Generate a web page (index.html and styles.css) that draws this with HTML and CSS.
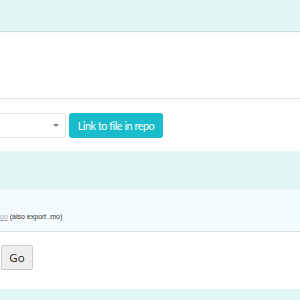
FILE: index.html
```html
<!DOCTYPE html>
<html>
<head>
<meta charset="utf-8">
<link rel="stylesheet" href="styles.css">
</head>
<body>
<div class="band top"></div>
<div class="panel"></div>
<div class="row">
  <div class="select"><span class="caret"></span></div>
  <button class="btn-link">Link to file in repo</button>
</div>
<div class="band mid"></div>
<div class="note"><span class="lnk">po</span> (also export .mo)</div>
<div class="gorow"><button class="btn-go">Go</button></div>
<div class="band bottom"></div>
</body>
</html>
```
FILE: styles.css
```css
html, body { margin: 0; padding: 0; background: #fff; overflow: hidden; }
body { width: 300px; height: 300px; font-family: Lato, "Open Sans", sans-serif; }
.band { background: #e2f6f4; }
.band.top { height: 31px; border-bottom: 1px solid #c8e0df; }
.panel { height: 66px; border-bottom: 1px solid #dde6e6; background: linear-gradient(#f8fdfd, #fff 6px); }
.row { display: flex; align-items: center; gap: 3px; padding: 14px 0 13px 0; }
.select { width: 120px; margin-left: -56px; height: 23px; border: 1px solid #e2e6e6; border-radius: 3px; background: #fff; position: relative; }
.caret { position: absolute; right: 6px; top: 10px; width: 0; height: 0; border-left: 3px solid transparent; border-right: 3px solid transparent; border-top: 3px solid #777; }
.btn-link { height: 25px; width: 94px; padding: 0; border: none; border-radius: 3px; background: #19bccb; color: #fff; font-family: Lato, sans-serif; font-size: 10.8px; letter-spacing: -0.45px; white-space: nowrap; }
.band.mid { height: 39px; }
.note { height: 42px; background: #f4fbfc; border-bottom: 1px solid #d4e2e8; font-family: "Liberation Sans", Arial, sans-serif; font-size: 7px; color: #333; box-sizing: border-box; padding-top: 23px; padding-left: 0; }
.lnk { color: #aaa; text-decoration: underline; }
.gorow { padding: 13px 0 19px 1px; }
.btn-go { width: 32px; height: 25px; padding: 0; background: #eee; border: 1px solid #ccc; border-radius: 2px; font-family: "Open Sans", sans-serif; font-size: 11.5px; color: #222; }
.band.bottom { height: 20px; }
```
